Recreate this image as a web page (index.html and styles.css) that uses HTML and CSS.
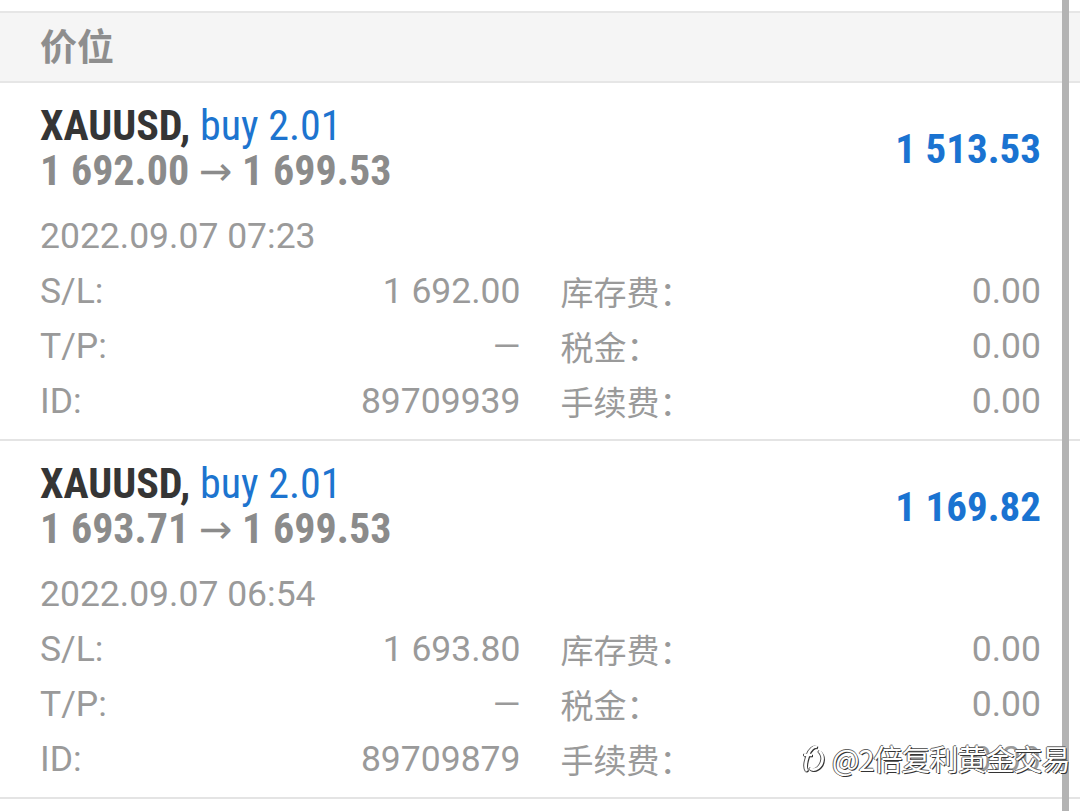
FILE: index.html
```html
<!DOCTYPE html>
<html lang="zh">
<head>
<meta charset="utf-8">
<link rel="stylesheet" href="styles.css">
</head>
<body>
<div class="page">
  <div class="topgap"></div>
  <div class="header">价位</div>

  <div class="card">
    <div class="head">
      <div class="head-left">
        <div class="title"><span class="sym">XAUUSD,</span> <span class="side">buy 2.01</span></div>
        <div class="prices">1 692.00 <span class="arrow">→</span> 1 699.53</div>
      </div>
      <div class="profit">1 513.53</div>
    </div>
    <div class="date">2022.09.07 07:23</div>
    <div class="kv">
      <div class="pair"><span>S/L:</span><span>1 692.00</span></div>
      <div class="pair"><span class="cjk">库存费：</span><span>0.00</span></div>
      <div class="pair"><span>T/P:</span><span>—</span></div>
      <div class="pair"><span class="cjk">税金：</span><span>0.00</span></div>
      <div class="pair"><span>ID:</span><span>89709939</span></div>
      <div class="pair"><span class="cjk">手续费：</span><span>0.00</span></div>
    </div>
  </div>

  <div class="card">
    <div class="head">
      <div class="head-left">
        <div class="title"><span class="sym">XAUUSD,</span> <span class="side">buy 2.01</span></div>
        <div class="prices">1 693.71 <span class="arrow">→</span> 1 699.53</div>
      </div>
      <div class="profit">1 169.82</div>
    </div>
    <div class="date">2022.09.07 06:54</div>
    <div class="kv">
      <div class="pair"><span>S/L:</span><span>1 693.80</span></div>
      <div class="pair"><span class="cjk">库存费：</span><span>0.00</span></div>
      <div class="pair"><span>T/P:</span><span>—</span></div>
      <div class="pair"><span class="cjk">税金：</span><span>0.00</span></div>
      <div class="pair"><span>ID:</span><span>89709879</span></div>
      <div class="pair"><span class="cjk">手续费：</span><span>0.00</span></div>
    </div>
  </div>

  <div class="scrollbar"></div>
  <div class="watermark">
    <svg class="wm-logo" viewBox="0 0 30 34" width="30" height="34">
      <path d="M9 30 C6 26 8 20 10 14 C12 8 16 5 19 6" fill="none" stroke="#fff" stroke-width="2.6"/>
      <path d="M21 10 C26 14 26 22 20 27 C17 29 14 29 12 27" fill="none" stroke="#fff" stroke-width="2.6"/>
      <path d="M6 14 L14 14" fill="none" stroke="#fff" stroke-width="2.4"/>
    </svg>
    <span class="wm-text">@2倍复利黄金交易</span>
  </div>
</div>
</body>
</html>
```

FILE: styles.css
```css
* { box-sizing: border-box; }
html, body { margin: 0; padding: 0; background: #ffffff; }
body {
  font-family: Roboto, "Liberation Sans", "Noto Sans CJK SC", sans-serif;
  color: #9a9a9a;
}
.page {
  position: relative;
  width: 1080px;
  height: 811px;
  overflow: hidden;
  background: #fff;
}
.topgap { height: 11px; }
.header {
  height: 72px;
  background: #f5f5f5;
  border-top: 2px solid #e6e6e6;
  border-bottom: 2px solid #e6e6e6;
  padding-left: 40px;
  font-family: "Noto Sans CJK SC", sans-serif;
  font-weight: 700;
  font-size: 37px;
  line-height: 64px;
  color: #8e8e8e;
}
.card {
  height: 358px;
  padding: 20px 39px 0 40px;
  border-bottom: 2px solid #e4e4e4;
}
.head {
  display: flex;
  justify-content: space-between;
  align-items: center;
}
.title, .prices, .profit {
  font-family: "Roboto Condensed", "Liberation Sans Narrow", "DejaVu Sans Condensed", Roboto, sans-serif;
  font-size: 42px;
  line-height: 45px;
}
.sym { font-weight: 700; color: #353535; }
.side { color: #1d74cf; }
.prices { font-weight: 700; color: #8b8b8b; }
.arrow {
  font-family: "DejaVu Sans", sans-serif;
  font-weight: 400;
  font-size: 40px;
}
.profit { font-size: 41px; font-weight: 700; color: #1a73d1; padding-top: 2px; }
.date {
  margin-top: 15px;
  font-size: 35.5px;
  line-height: 55px;
}
.kv {
  display: grid;
  grid-template-columns: 1fr 1fr;
  column-gap: 40px;
}
.pair {
  display: flex;
  justify-content: space-between;
  font-size: 35.5px;
  line-height: 55px;
}
.cjk { font-family: "Noto Sans CJK SC", sans-serif; font-size: 33px; }
.scrollbar {
  position: absolute;
  top: 0;
  right: 11px;
  width: 7px;
  height: 811px;
  background: #b3b3b3;
}
.watermark {
  position: absolute;
  left: 798px;
  top: 737px;
  display: flex;
  align-items: center;
  gap: 4px;
}
.wm-logo {
  filter: drop-shadow(1px 1px 0 #333) drop-shadow(-1px 0 0 #555);
}
.wm-text {
  font-family: "Noto Sans CJK SC", sans-serif;
  font-size: 29px;
  color: #ffffff;
  text-shadow: 1px 1px 0 #333, -1px 0 0 #666, 0 -1px 0 #666;
  letter-spacing: -1px;
}
```
